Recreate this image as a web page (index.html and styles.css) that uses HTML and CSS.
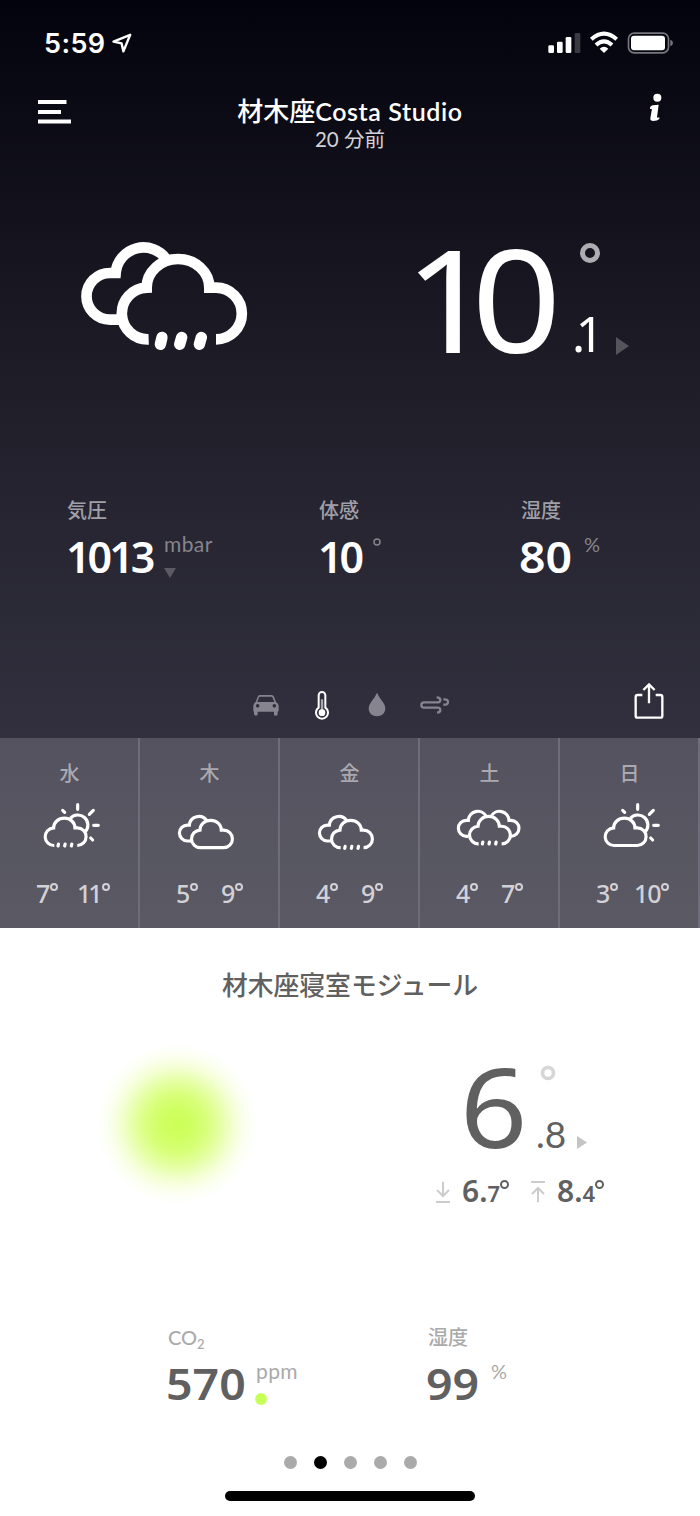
FILE: index.html
```html
<!DOCTYPE html>
<html lang="ja">
<head>
<meta charset="utf-8">
<title>Weather Station</title>
<link rel="stylesheet" href="styles.css">
</head>
<body>
<svg class="defs" width="0" height="0" aria-hidden="true">
  <defs>
    <path id="front-closed" d="M266 358A77.5 77.5 0 0 1 260 203A94 86 0 0 1 448 203H468A77.5 77.5 0 0 1 468 358Z"/>
    <path id="front-open" d="M266 358A77.5 77.5 0 0 1 260 203A94 86 0 0 1 448 203H468A77.5 77.5 0 0 1 468 358"/>
    <path id="back" d="M182 299H150A70.5 70 0 0 1 150 159H167A84 84 0 0 1 320 119"/>
    <path id="back-short" d="M168 299H150A70.5 70 0 0 1 150 159H167A84 84 0 0 1 324 122"/>
    <g id="sun">
      <path d="M151 70A30 30 0 1 1 196 110"/>
      <path class="ray" d="M173 29V43M220 46L208 58M221 91H235M212 129L218 135M128 46L134 52"/>
    </g>
    <path id="drops" d="M115.500 147l-1.500 6M135.500 147l-1.500 6M155.500 147l-1.500 6"/>
  </defs>
</svg>
<main class="phone">
  <section class="outdoor">
    <div class="status">
      <span class="time">5:59</span>
      <svg class="locate" width="20" height="20" viewBox="0 0 20 20"><path d="M18.2 1.8L1.5 8.6L9.6 10.4L11.4 18.4Z"/></svg>
      <svg class="signals" width="126" height="24" viewBox="0 0 378 72">
        <g fill="#fff"><rect x="1" y="43" width="17" height="23" rx="4"/><rect x="27" y="32" width="17" height="34" rx="4"/><rect x="53" y="18" width="17" height="48" rx="4"/></g>
        <rect x="80" y="6" width="17" height="60" rx="4" fill="#3b3a43"/>
        <g fill="none" stroke="#fff" stroke-width="12"><path d="M130 25Q168 -9 206 25"/><path d="M144 42Q168 20 192 42"/></g>
        <path d="M155 53Q168 42 181 53L168 66Z" fill="#fff"/>
        <rect x="241.500" y="6.500" width="120" height="59" rx="17" fill="none" stroke="#77767d" stroke-width="5"/>
        <rect x="249" y="14" width="102" height="44" rx="9" fill="#fff"/>
        <path d="M367 26Q375 29 375 36T367 46Z" fill="#77767d"/>
      </svg>
    </div>
    <header class="header">
      <svg class="menu" width="33" height="24" viewBox="0 0 33 24"><path d="M0 2H28.500M0 12H23M0 21.500H33"/></svg>
      <div class="heading">
        <h1><span class="jp">材木座</span><span class="latin">Costa Studio</span></h1>
        <p>20 分前</p>
      </div>
      <svg class="info" width="14" height="30" viewBox="0 0 42 90"><circle cx="25" cy="17" r="12"/><path d="M3 48Q3 42 11 40L29 38L24 76Q26 78 31 76V81Q25 87 13 87Q3 87 4 79L9 50Q6 52 3 51Z"/></svg>
    </header>
    <div class="now">
      <svg class="bigcloud" width="210" height="150" viewBox="0 0 630 450">
        <g fill="none" stroke="#fff" stroke-width="32"><use href="#back"/><use href="#front-open"/></g>
        <path d="M306 352L301 373M365 352L359 373M424 352L418 373" fill="none" stroke="#fff" stroke-width="34" stroke-linecap="round"/>
      </svg>
      <div class="temp">10</div>
      <div class="fraction">
        <svg width="20" height="20" viewBox="0 0 20 20"><circle cx="10" cy="10" r="7.500" fill="none" stroke="#adacb3" stroke-width="5"/></svg>
        <span class="point">.1</span>
      </div>
      <svg class="trend" width="13" height="18" viewBox="0 0 13 18"><path d="M0 0L13 9L0 18Z" fill="#55545d"/></svg>
    </div>
    <div class="metrics">
      <div class="metric"><h2>気圧</h2><div class="reading"><b class="v1013">1013</b><span class="unit">mbar<svg width="12" height="10" viewBox="0 0 12 10"><path d="M0 0H12L6 10Z" fill="#5b5a65"/></svg></span></div></div>
      <div class="metric"><h2>体感</h2><div class="reading"><b class="v10">10</b><span class="unit"><svg class="degree" width="8" height="8" viewBox="0 0 8 8"><circle cx="4" cy="4" r="3" fill="none" stroke="#85848c" stroke-width="1.500"/></svg></span></div></div>
      <div class="metric"><h2>湿度</h2><div class="reading"><b class="round">80</b><span class="unit pct">%</span></div></div>
    </div>
    <nav class="tools">
      <svg width="26" height="22" viewBox="0 0 78 66"><path fill="#85848f" fill-rule="evenodd" d="M20 3H56Q61 3 63 8L69 24Q77 28 77 36V51L74 53V60Q74 65 68 65T63 60V53H14V60Q14 65 9 65T3 60V53L1 51V36Q1 28 8 24L14 8Q16 3 20 3ZM21 8Q19 8 18 10L13 24H64L58 10Q57 8 55 8ZM14 30A5.500 5.500 0 1 0 14 41A5.500 5.500 0 1 0 14 30ZM64 30A5.500 5.500 0 1 0 64 41A5.500 5.500 0 1 0 64 30Z"/></svg>
      <svg width="14" height="29" viewBox="0 0 42 87"><path d="M11 50V13A10 10 0 0 1 31 13V50A18 18 0 1 1 11 50Z" fill="none" stroke="#fff" stroke-width="6"/><path d="M21 25V58" stroke="#aaa9b0" stroke-width="7"/><circle cx="21" cy="65" r="10" fill="#fff"/></svg>
      <svg width="18" height="25" viewBox="0 0 54 75"><path d="M27 2Q33 16 44 29Q52 39 52 49C52 64 41 73 27 73S2 64 2 49Q2 39 10 29Q21 16 27 2Z" fill="#85848f"/></svg>
      <svg width="30" height="20" viewBox="0 0 90 60"><path d="M50 7Q61 7 61 15T49 22H12A8 8 0 0 0 12 38H53Q61 38 61 45T51 53M70 13Q84 12 84 21T70 29" fill="none" stroke="#85848f" stroke-width="7"/></svg>
      <svg class="share" width="30" height="38" viewBox="0 0 90 114"><path d="M25 39H11Q5 39 5 45V101Q5 107 11 107H79Q85 107 85 101V45Q85 39 79 39H65M45 64V8M28 24L45 7L62 24" fill="none" stroke="#fff" stroke-width="7"/></svg>
    </nav>
    <div class="forecast">
      <div class="day"><h3>水</h3><svg class="wx" viewBox="0 0 300 180"><use href="#sun"/><g transform="translate(12.200 29.500) scale(.341)" class="thick"><use href="#front-open"/></g><use class="ray" href="#drops"/></svg><p class="range"><span>7<i></i></span><span class="hi ones">11<i></i></span></p></div>
      <div class="day"><h3>木</h3><svg class="wx" viewBox="0 0 300 180"><g transform="translate(31.200 36) scale(.341)" class="thick"><use href="#back"/><use href="#front-closed"/></g></svg><p class="range"><span>5<i></i></span><span class="hi">9<i></i></span></p></div>
      <div class="day"><h3>金</h3><svg class="wx" viewBox="0 0 300 180"><g transform="translate(31.200 36) scale(.341)" class="thick"><use href="#back"/><use href="#front-open"/></g><use class="ray" href="#drops" x="20" y="7"/></svg><p class="range"><span>4<i></i></span><span class="hi">9<i></i></span></p></div>
      <div class="day"><h3>土</h3><svg class="wx" viewBox="0 0 300 180"><g transform="translate(28 22) scale(.341)" class="thick"><use href="#back-short"/></g><g transform="translate(264 22) scale(-.341 .341)" class="thick"><use href="#back-short"/></g><g transform="translate(25.300 24.500) scale(.341)" class="thick"><use href="#front-open"/></g><use class="ray" href="#drops" x="13" y="-6"/></svg><p class="range"><span>4<i></i></span><span class="hi">7<i></i></span></p></div>
      <div class="day"><h3>日</h3><svg class="wx" viewBox="0 0 300 180"><use href="#sun"/><g transform="translate(12.200 29.500) scale(.341)" class="thick"><use href="#front-closed"/></g></svg><p class="range"><span>3<i></i></span><span class="hi ten">10<i></i></span></p></div>
    </div>
  </section>
  <section class="indoor">
    <h2 class="room">材木座寝室モジュール</h2>
    <div class="roomnow">
      <div class="glow"></div>
      <div class="roomtemp">
        <div class="roommain">
          <span class="six">6</span>
          <span class="eight">.8</span>
          <svg class="ring" width="16" height="16" viewBox="0 0 16 16"><circle cx="8" cy="8" r="5.500" fill="none" stroke="#d6d6d6" stroke-width="3.600"/></svg>
          <svg class="tri" width="10" height="13" viewBox="0 0 10 13"><path d="M0 0L10 6.500L0 13Z" fill="#c4c4c4"/></svg>
        </div>
        <div class="minmax">
          <svg width="14" height="22" viewBox="0 0 42 66"><path d="M21 2V43M3 27L21 45L39 27M0 63H42"/></svg>
          <span class="mm">6.<small>7</small><i></i></span>
          <svg width="14" height="22" viewBox="0 0 42 66"><path d="M21 64V23M3 39L21 21L39 39M0 3H42"/></svg>
          <span class="mm">8.<small>4</small><i></i></span>
        </div>
      </div>
    </div>
    <div class="roommetrics">
      <div class="metric"><h2 class="co">CO<small>2</small></h2><div class="reading"><b class="round v570">570</b><span class="unit">ppm<svg class="air" width="12" height="12" viewBox="0 0 12 12"><circle cx="6" cy="6" r="5.900" fill="#c6ff57"/></svg></span></div></div>
      <div class="metric"><h2>湿度</h2><div class="reading"><b class="round">99</b><span class="unit pct">%</span></div></div>
    </div>
    <div class="pager"><i></i><i class="on"></i><i></i><i></i><i></i></div>
    <div class="home"></div>
  </section>
</main>
</body>
</html>
```

FILE: styles.css
```css
* { box-sizing: border-box; margin: 0; padding: 0; }
body { width: 700px; height: 1516px; overflow: hidden; background: #fff; font-family: Lato, "Noto Sans CJK JP", sans-serif; }
svg { display: block; flex: none; }
.defs { position: absolute; }
.outdoor { height: 928px; background: linear-gradient(#03030d 0, #15141e 240px, #252430 500px, #32303e 738px, #393845 928px); color: #fff; }
.status { height: 86px; display: flex; align-items: flex-start; padding: 32px 26px 0 44px; }
.time { font: 600 27px/24px Inter, sans-serif; width: 68px; letter-spacing: .4px; }
.locate { margin-top: 1px; fill: none; stroke: #fff; stroke-width: 2.400; stroke-linejoin: round; }
.signals { margin-left: auto; margin-top: -1px; }
.header { height: 74px; display: flex; align-items: flex-start; padding: 0 38px; justify-content: space-between; }
.menu { margin-top: 14px; stroke: #fff; stroke-width: 4; }
.heading { text-align: center; margin-top: 8px; margin-right: 20px; }
.heading h1 { font-size: 26px; line-height: 34px; height: 34px; font-weight: 500; white-space: nowrap; }
.latin { font-weight: 600; font-size: 25px; letter-spacing: .6px; }
.heading p { font: 400 20.500px/22px Lato, "Noto Sans CJK JP", sans-serif; color: #d3d2d6; }
.info { margin-top: 6px; fill: #fff; margin-right: -1px; }
.now { height: 338px; display: flex; padding: 60px 0 0 60px; align-items: flex-start; }
.temp { font: 400 143px/150px "Noto Sans", sans-serif; letter-spacing: -20.500px; margin: 3px 0 0 134px; width: 174px; transform: scaleX(1.1); transform-origin: 0 0; }
.fraction { display: flex; flex-direction: column; margin-top: 23px; width: 38px; }
.fraction svg { margin-left: 2px; }
.point { font: 400 49px/60px "Noto Sans", sans-serif; margin: 40px 0 0 -6px; letter-spacing: -9.500px; }
.trend { margin-top: 117px; }
.metrics { display: grid; grid-template-columns: 252px 202px auto; padding-left: 67px; height: 172px; }
.metric h2 { font: 500 20px/24px "Noto Sans CJK JP", sans-serif; color: #a1a0a8; height: 24px; }
.reading { display: flex; align-items: flex-start; margin-top: 12px; }
.reading b { font: 600 43px/46px "Noto Sans", sans-serif; letter-spacing: -3px; margin-left: -1px; width: 65px; }
.reading b.round { letter-spacing: 0; margin-left: -2px; width: 65px; transform: scaleX(1.08); transform-origin: 0 0; }
.reading b.v1013 { width: 98px; }
.reading b.v10 { width: 56px; }
.reading b.v570 { width: 90px; }
.unit { font: 400 21px/24px Lato, sans-serif; color: #85848d; margin-top: -2px; letter-spacing: .4px; }
.unit svg { margin-top: 12px; }
.unit .degree { margin: 6px 0 0 -1px; }
.pct { font-size: 20px; margin-top: -2px; }
.tools { height: 68px; display: flex; padding: 12px 36px 0 253px; align-items: flex-start; }
.tools svg:nth-child(1) { margin-top: 12px; }
.tools svg:nth-child(2) { margin: 9px 0 0 36px; }
.tools svg:nth-child(3) { margin: 10px 0 0 39px; }
.tools svg:nth-child(4) { margin: 13px 0 0 34px; }
.tools .share { margin-left: auto; }
.forecast { height: 190px; display: grid; grid-template-columns: repeat(5, 140px); background: rgba(255, 255, 255, .17); }
.day { border-right: 2px solid #6e6d79; padding-top: 22px; }
.day h3 { font: 500 20px/26px "Noto Sans CJK JP", sans-serif; color: #aaa9b1; text-align: center; padding-left: 1px; }
.wx { width: 100px; height: 60px; margin: 9px 0 0 20px; fill: none; stroke: #fff; stroke-width: 9.500; }
.thick { stroke-width: 28; }
.ray { stroke-width: 9.500; stroke-linecap: round; }
.range { display: flex; margin-top: 23px; padding-left: 36px; font: 500 25px/30px "Noto Sans", sans-serif; color: #d2d1d7; }
.range span { display: flex; width: 45px; }
.range span.ones { margin-left: -4px; letter-spacing: -3px; }
.range span.ten { margin-left: -7px; width: 50px; letter-spacing: -1px; }
.range i, .mm i { width: 8px; height: 8px; border: 2px solid; border-radius: 50%; margin: 5px 0 0 0; flex: none; }
.range .ones i { margin-left: 2px; }
.indoor { height: 588px; color: #606060; }
.room { padding-top: 37px; height: 76px; font: 500 25.800px/38px "Noto Sans CJK JP", sans-serif; text-align: center; }
.roomnow { display: flex; height: 321px; padding: 38px 0 0 87px; }
.glow { width: 180px; height: 180px; margin-right: 169px; margin-top: -8px; border-radius: 50%; background: radial-gradient(circle, #ccff58 0, #cfff62 15px, #d9ff7c 30px, #e5ffa4 43px, #f3ffd2 56px, #fbfff0 68px, #fff 80px); }
.roommain { display: flex; height: 132px; padding-left: 24px; align-items: flex-start; }
.six { font: 400 109px/100px "Noto Sans", sans-serif; width: 76px; margin-top: 14px; transform: scaleX(1.08); transform-origin: 0 0; }
.eight { font: 400 37px/40px Lato, sans-serif; width: 42px; margin-top: 72px; }
.ring { margin: 23px 0 0 -38px; }
.tri { margin: 94px 0 0 21px; }
.minmax { display: flex; margin-top: 2px; }
.minmax svg { margin-top: 5px; fill: none; stroke: #ccc; stroke-width: 6; }
.mm { display: flex; align-items: baseline; font: 600 30px/30px "Noto Sans", sans-serif; margin-left: 12px; width: 69px; }
.mm small { font-size: 22px; line-height: 24px; }
.mm i { width: 9px; height: 9px; margin-top: 4px; align-self: flex-start; }
.roommetrics { display: grid; grid-template-columns: 260px auto; padding-left: 168px; height: 130px; }
.indoor .metric h2, .indoor .unit { color: #aaa; }
.indoor .co { font-family: Lato, sans-serif; }
.co small { font-size: 13px; position: relative; top: 4px; }
.unit .air { margin-top: 10px; margin-left: -1px; }
.pager { display: flex; justify-content: center; gap: 17px; margin-top: 1px; }
.pager i { width: 13px; height: 13px; border-radius: 50%; background: #aaa; }
.pager .on { background: #000; }
.home { width: 250px; height: 10px; border-radius: 5px; background: #000; margin: 22px auto 0; }
```
